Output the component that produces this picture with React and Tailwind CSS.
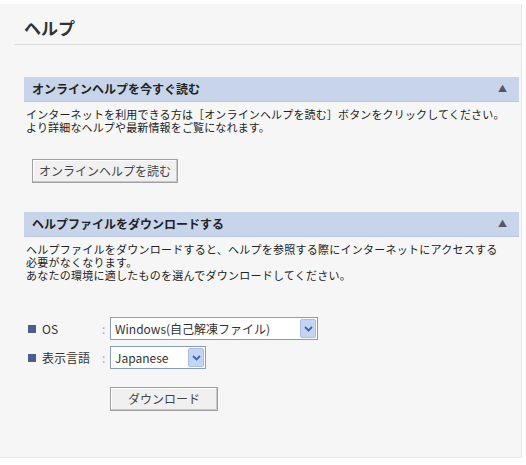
const font = { fontFamily: '"Noto Sans CJK JP", "DejaVu Sans", sans-serif' };

function SectionHeader({ title }) {
  return (
    <div className="flex items-center justify-between h-[25px] bg-[#c7d4ea] pl-2 pr-3 border-b border-[#b8c6df]">
      <span className="text-[12px] font-bold text-[#222]">{title}</span>
      <span className="text-[9px] text-[#556]">▲</span>
    </div>
  );
}

function Select({ value, width }) {
  return (
    <div className={`flex items-center h-[23px] border border-[#8a9bb5] bg-white ${width}`}>
      <span className="flex-1 px-1 text-[12px] text-[#333] whitespace-nowrap">{value}</span>
      <span className="flex items-center justify-center w-[16px] h-[19px] mr-[1px] bg-[#c3d5f2] border border-[#a9c0e6] rounded-[2px]">
        <svg width="9" height="6" viewBox="0 0 9 6">
          <path d="M1 1 L4.5 4.5 L8 1" fill="none" stroke="#3d64b0" strokeWidth="1.8" />
        </svg>
      </span>
    </div>
  );
}

const btn =
  'border border-[#a0a0a0] bg-[#f0f0f0] text-[12px] text-[#444] shadow-[inset_-1px_-1px_0_#c8c8c8,inset_1px_1px_0_#fff]';

export default function App() {
  return (
    <div className="w-[526px] h-[465px] bg-white pt-[4px]" style={font}>
      <div className="w-[522px] h-[454px] bg-[#f6f6f6] border-r border-b border-[#e6e6e6]">
        <div className="h-[41px] pl-[10px] pt-[13px] ml-[14px] border-b border-[#dcdcdc]">
          <h1 className="text-[17px] leading-[22px] font-bold text-[#333]">ヘルプ</h1>
        </div>

        <div className="pl-[24px] pr-[2px] pt-[32px]">
          <SectionHeader title="オンラインヘルプを今すぐ読む" />
          <div className="pl-[2px] pt-[6px] text-[11px] leading-[13px] tracking-[0.15px] text-[#222]">
            <p>インターネットを利用できる方は［オンラインヘルプを読む］ボタンをクリックしてください。</p>
            <p>より詳細なヘルプや最新情報をご覧になれます。</p>
          </div>
          <div className="pl-[8px] pt-[23px]">
            <button className={`w-[146px] h-[24px] ${btn}`}>オンラインヘルプを読む</button>
          </div>

          <div className="pt-[29px]">
            <SectionHeader title="ヘルプファイルをダウンロードする" />
          </div>
          <div className="pl-[2px] pt-[6px] text-[11px] leading-[13px] tracking-[0.25px] text-[#222]">
            <p>ヘルプファイルをダウンロードすると、ヘルプを参照する際にインターネットにアクセスする</p>
            <p>必要がなくなります。</p>
            <p>あなたの環境に適したものを選んでダウンロードしてください。</p>
          </div>

          <div className="pt-[35px] pl-[4px] flex flex-col gap-[6px] text-[12px] text-[#333]">
            <div className="flex items-center">
              <span className="w-[8px] h-[8px] bg-[#4a5f8a] mr-[6px]" />
              <span className="w-[60px]">OS</span>
              <span className="w-[8px] text-[#aaa]">:</span>
              <Select value="Windows(自己解凍ファイル)" width="w-[208px]" />
            </div>
            <div className="flex items-center">
              <span className="w-[8px] h-[8px] bg-[#4a5f8a] mr-[6px]" />
              <span className="w-[60px]">表示言語</span>
              <span className="w-[8px] text-[#aaa]">:</span>
              <Select value="Japanese" width="w-[96px]" />
            </div>
            <div className="pl-[82px] pt-[12px]">
              <button className={`w-[108px] h-[24px] ${btn}`}>ダウンロード</button>
            </div>
          </div>
        </div>
      </div>
    </div>
  );
}
